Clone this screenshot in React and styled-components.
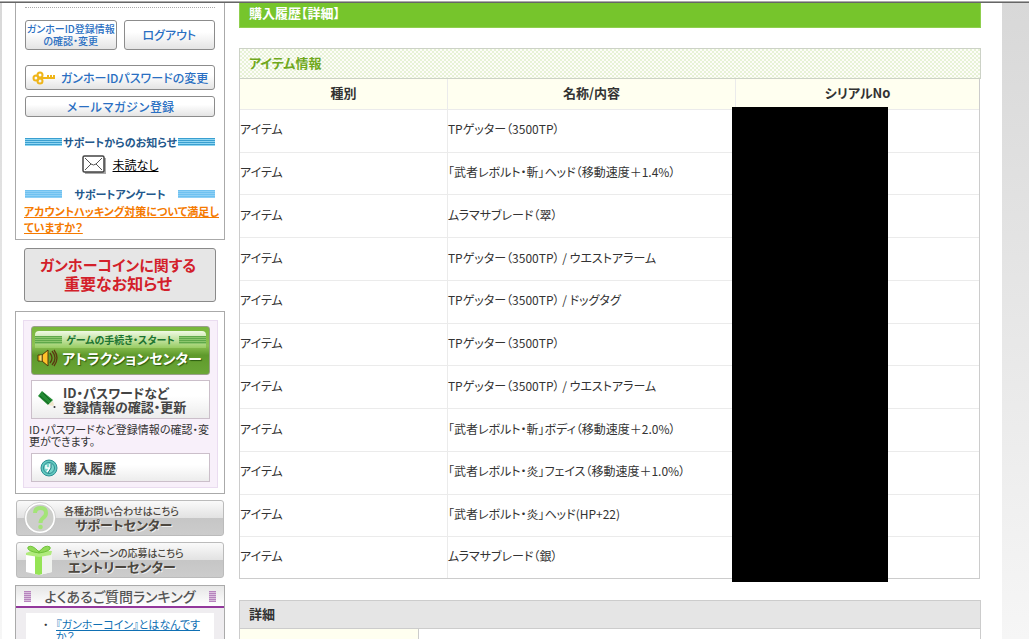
import React from "react";
import styled, { createGlobalStyle } from "styled-components";

const GlobalStyle = createGlobalStyle`
  * { box-sizing: border-box; }
  body {
    margin: 0;
    background: #fff;
    color: #333;
    font-family: "Noto Sans CJK JP", "Liberation Sans", sans-serif;
    font-size: 12px;
    line-height: 16px;
    font-feature-settings: "palt";
  }
  button, h1, h2, h3, p { margin: 0; }
  button { font: inherit; font-feature-settings: inherit; cursor: pointer; }
`;

const Page = styled.div`
  display: flex;
  flex-direction: column;
  height: 100vh;
  overflow: hidden;
`;

const TopRule = styled.div`
  flex: 0 0 3px;
  background: linear-gradient(#fff 0 1px, #aaa 1px 2px, #666 2px);
`;

const Backdrop = styled.div`
  flex: 1;
  min-height: 0;
  padding: 0 27px 0 2px;
  background: linear-gradient(#d8d8d8, #f6f6f6);
`;

const Sheet = styled.div`
  display: flex;
  align-items: flex-start;
  gap: 14px;
  height: 100%;
  padding: 0 21px 0 13px;
  background: #fff;
`;

const Sidebar = styled.aside`
  flex: 0 0 210px;
  display: flex;
  flex-direction: column;
  min-width: 0;
  width: 210px;
`;

const Main = styled.main`
  flex: 1;
  min-width: 0;
`;

const Panel = styled.section`
  border: 1px solid #aaa;
`;

const AccountPanel = styled(Panel)`
  border-top: 0;
  padding: 4px 9px 5px;
  height: 237px;
`;

const Dots = styled.hr`
  margin: 0 0 12px;
  border: 0;
  border-top: 1px dotted #aaa;
`;

const ButtonPair = styled.div`
  display: grid;
  grid-template-columns: minmax(0, 1fr) minmax(0, 1fr);
  gap: 7px;
  margin-bottom: 15px;
`;

const PillButton = styled.button`
  display: flex;
  align-items: center;
  justify-content: center;
  gap: 5px;
  width: 100%;
  height: ${(p) => p.$h}px;
  margin-bottom: ${(p) => p.$after || 0}px;
  padding: 0;
  border: 1px solid #8c8c8c;
  border-radius: 3px;
  background: linear-gradient(#fff 40%, #e4e4e4);
  color: #2a6fc2;
  font-size: ${(p) => p.$size}px;
  font-weight: 500;
  font-feature-settings: ${(p) => (p.$full ? "normal" : '"palt"')};
  line-height: 12px;
  white-space: nowrap;
`;

const Striped = styled.h3`
  display: flex;
  align-items: center;
  justify-content: space-between;
  height: 16px;
  color: #23588c;
  font-size: 11px;
  font-weight: 700;
  white-space: nowrap;
  &::before, &::after {
    content: "";
    width: 37px;
    height: 8px;
    background: ${(p) =>
      p.$soft
        ? "repeating-linear-gradient(#6fc1f0 0 1px, #8fd0f5 1px 2px)"
        : "repeating-linear-gradient(#3a9fd0 0 1px, #8fd6f2 1px 2px)"};
  }
`;

const MailRow = styled.div`
  display: flex;
  align-items: center;
  justify-content: center;
  gap: 7px;
  height: 19px;
  margin: 5px 0 12px;
  a { color: #000; }
`;

const SurveyLink = styled.a`
  display: block;
  margin: 1px -8px 0 -1px;
  color: #f57a00;
  font-size: 11px;
  font-weight: 700;
  white-space: nowrap;
`;

const Notice = styled.button`
  height: 54px;
  margin: 8px 9px 9px;
  padding: 0 4px 2px 0;
  border: 1px solid #8a8a8a;
  border-radius: 3px;
  background: #e6e6e6;
  color: #d3202a;
  font-size: 15px;
  font-weight: 700;
  line-height: 19px;
  white-space: nowrap;
  span { display: block; }
  span + span { font-size: 16px; }
`;

const ServicePanel = styled(Panel)`
  margin-bottom: 6px;
  padding: 8px 6px 5px 7px;
`;

const Lilac = styled.div`
  display: flex;
  flex-direction: column;
  height: 168px;
  padding: 5px 7px;
  border: 1px solid #eadcf0;
  background: #f8f0fa;
`;

const Attraction = styled.button`
  display: flex;
  flex-direction: column;
  height: 49px;
  margin-bottom: 5px;
  padding: 4px 3px 0;
  border: 1px solid #9a9f8c;
  border-radius: 3px;
  background: linear-gradient(#78b63c, #8cc152 40%, #5f9a2c 60%, #6aa636);
  color: #fff;
  white-space: nowrap;
`;

const AttractionTop = styled.span`
  display: flex;
  align-items: center;
  justify-content: space-between;
  align-self: stretch;
  height: 17px;
  border-radius: 4px 4px 0 0;
  background: linear-gradient(#f0fae4, #98cc62);
  color: #1c7430;
  font-size: 10px;
  font-weight: 700;
  &::before, &::after {
    content: "";
    width: 27px;
    height: 8px;
    background: repeating-linear-gradient(#5fa84a 0 1px, #8cc66c 1px 2px);
  }
`;

const AttractionName = styled.span`
  display: flex;
  align-items: center;
  gap: 4px;
  height: 20px;
  padding-left: 2px;
  font-size: 14px;
  font-weight: 700;
  text-shadow: 1px 1px 1px #2c5c10;
`;

const WhiteButton = styled.button`
  display: flex;
  align-items: center;
  gap: ${(p) => p.$gap}px;
  height: ${(p) => p.$h}px;
  padding: 0 0 0 ${(p) => p.$pad}px;
  border: 1px solid #cbbfca;
  background: linear-gradient(#fff 40%, #ececec);
  color: #444;
  font-size: 13px;
  font-weight: 700;
  line-height: 14px;
  text-align: left;
  white-space: nowrap;
`;

const Hint = styled.p`
  margin: 4px -6px 6px -2px;
  font-size: 11px;
  line-height: 12px;
  white-space: nowrap;
`;

const CenterButton = styled.button`
  display: grid;
  grid-template-columns: 34px 1fr;
  align-items: center;
  column-gap: ${(p) => p.$gap}px;
  height: 36px;
  margin: 0 1px 6px;
  padding: 0 0 0 6px;
  border: 1px solid #bbb;
  border-radius: 3px;
  background: linear-gradient(#fafafa, #e2e2e2 50%, #c6c6c6 50%, #ccc);
  color: #4c4740;
  text-align: left;
  white-space: nowrap;
  small, strong { display: block; line-height: 14px; }
  small { font-size: 10px; font-weight: 500; }
  strong { padding-left: ${(p) => p.$indent}px; font-size: 13px; text-shadow: 1px 1px 0 #eee; }
`;

const Ranking = styled(Panel)`
  margin-top: 1px;
  background: #efedf0;
`;

const RankingTitle = styled.h2`
  display: flex;
  align-items: center;
  justify-content: space-between;
  height: 22px;
  padding: 0 8px;
  border-bottom: 2px solid #93389c;
  background: linear-gradient(#e6e6e6, #fff);
  color: #555;
  font-size: 14px;
  font-weight: 500;
  white-space: nowrap;
  &::before, &::after {
    content: "";
    width: 7px;
    height: 11px;
    background: repeating-linear-gradient(#b684bd 0 1px, #d9bfdd 1px 2px);
  }
`;

const RankingList = styled.ul`
  margin: 5px 10px 0;
  padding: 5px 8px 10px 30px;
  background: #fff;
  list-style: none;
  font-size: 11px;
  line-height: 12px;
  li { white-space: nowrap; }
  li::before { content: "・"; float: left; margin-left: -13px; }
  a { color: #0f70b4; }
`;

const PageTitle = styled.h1`
  height: 25px;
  margin-bottom: 20px;
  padding: 2px 10px 0 9px;
  border: 1px solid #8fcf4e;
  border-top: 0;
  background: #76c52c;
  color: #fff;
  font-size: 13px;
  line-height: 16px;
`;

const Checked = styled.h2`
  height: 31px;
  padding: 0 9px;
  border: 1px solid #ccd2c6;
  background: repeating-conic-gradient(#e7f2d6 0 25%, #fdfdf8 0 50%) 0 0 / 4px 4px;
  color: #6fa81c;
  font-size: 13px;
  line-height: 27px;
`;

const TableArea = styled.div`
  position: relative;
  margin: 0 1px 21px 0;
`;

const Items = styled.table`
  width: 100%;
  height: 500px;
  table-layout: fixed;
  border-collapse: separate;
  border-spacing: 0;
  border: 1px solid #ccc;
  border-top: 0;
  font-family: "Liberation Sans Narrow", "Noto Sans CJK JP", sans-serif;
  th, td { border-bottom: 1px solid #ebebeb; white-space: nowrap; }
  th + th, td + td { border-left: 1px solid #ebebeb; }
  tbody tr:last-child td { border-bottom: 0; }
  th {
    height: 31px;
    padding: 0 0 3px;
    background: #fffff0;
    font-family: "Noto Sans CJK JP", sans-serif;
    font-size: 13px;
    font-weight: 700;
  }
  th:nth-child(1) { width: 28%; }
  th:nth-child(2) { width: 39%; }
  td { padding: 0 0 3px; }
`;

const Redaction = styled.div`
  position: absolute;
  top: 28px;
  bottom: -3px;
  left: 493px;
  width: 156px;
  background: #000;
`;

const DetailTitle = styled.h2`
  height: 29px;
  padding: 0 9px;
  border: 1px solid #ccc;
  background: #e5e5e5;
  font-size: 13px;
  line-height: 25px;
`;

const Details = styled.div`
  display: grid;
  grid-template-columns: 179px 1fr;
  height: 40px;
  border: 1px solid #ccc;
  border-top: 0;
  > span:first-child { border-right: 1px solid #ccc; background: #fffff0; }
`;

const Key = () => (
  <svg width="24" height="14" viewBox="0 0 24 14" fill="none" stroke="#efb51a" strokeWidth="2" aria-hidden="true">
    <circle cx="4" cy="7" r="2.5" />
    <circle cx="8" cy="4" r="2.5" />
    <circle cx="8" cy="10" r="2.5" />
    <path d="M10 7h13M16 7V4M19 7V4M22 8V4" />
  </svg>
);

const Envelope = () => (
  <svg width="24" height="19" viewBox="0 0 24 19" fill="none" aria-hidden="true">
    <path d="M3 3h21v16H3z" fill="#aaa" />
    <rect x="1" y="1" width="21" height="16" rx="1.5" fill="#fff" stroke="#444" strokeWidth="1.5" />
    <path d="M3 3l6 6q2.5 2 5 0l6-6M3 15l6-6M20 15l-6-6" stroke="#555" />
  </svg>
);

const Speaker = () => (
  <svg width="21" height="18" viewBox="0 0 21 18" aria-hidden="true">
    <path d="M1 6h4v6H1z M5 6l6-5v16l-6-5z" fill="#ffc22b" stroke="#513b0a" />
    <path d="M4 6v6" stroke="#fff0a0" />
    <path d="M13 4q4 5 0 10M15 2q6 7 0 14M17 1q6 8 0 16" fill="none" stroke="#5a3a10" strokeWidth="1.3" />
  </svg>
);

const Pencil = () => (
  <svg width="18" height="18" viewBox="0 0 18 18" aria-hidden="true">
    <path d="M4 0l11 9-5 5L0 5z" fill="#238b34" />
    <path d="M2 5l9 8M5 2l8 8" stroke="#12631f" />
    <path d="M15 10l1 4-1 1-5-1z" fill="#efe6cb" />
    <circle cx="16.5" cy="16" r="1" fill="#333" />
  </svg>
);

const Clock = () => (
  <svg width="18" height="18" viewBox="0 0 18 18" fill="none" aria-hidden="true">
    <circle cx="9" cy="9" r="8" fill="#63c9c0" stroke="#2e8f93" />
    <circle cx="9" cy="9" r="5.5" fill="#7ad5cc" stroke="#2e8f93" />
    <path d="M10 5v4l-3 4M6 6v3h3" stroke="#fff" strokeWidth="1.5" />
    <path d="M11 5v4l-3 5" stroke="#277c83" />
  </svg>
);

const Question = () => (
  <svg width="34" height="34" viewBox="0 0 34 34" fill="none" aria-hidden="true">
    <circle cx="17" cy="17" r="14.5" fill="#cdcecb" stroke="#fff" strokeWidth="2" />
    <circle cx="17" cy="17" r="15.7" stroke="#b8b8b8" strokeWidth=".6" />
    <path d="M12 12q0-5 5.500-5t5.500 5q0 3-3 5-2.500 2-2.500 5" stroke="#a3e477" strokeWidth="4" />
    <circle cx="17.5" cy="26" r="2.3" fill="#a3e477" />
  </svg>
);

const Gift = () => (
  <svg width="34" height="34" viewBox="0 0 34 34" aria-hidden="true">
    <path d="M3 11l13 2 13-2v18l-13 3-13-3z" fill="#fff" />
    <path d="M16 13l13-2v18l-13 3z" fill="#f0f2ee" />
    <path d="M12 12l7 1v18l-3 1-4-1z" fill="#95e455" />
    <path d="M3 10l8-3 18 1-1 4-12 2L3 12z" fill="#b0eb7c" />
    <path d="M16 9Q9 1 5 4q-2 4 11 6zM16 9q6-8 11-5 2 4-11 6z" fill="#92da58" stroke="#6fc33a" />
  </svg>
);

const items = [
  "TPゲッター（3500TP）",
  "「武者レボルト・斬」ヘッド（移動速度＋1.4%）",
  "ムラマサブレード（翠）",
  "TPゲッター（3500TP） / ウエストアラーム",
  "TPゲッター（3500TP） / ドッグタグ",
  "TPゲッター（3500TP）",
  "TPゲッター（3500TP） / ウエストアラーム",
  "「武者レボルト・斬」ボディ（移動速度＋2.0%）",
  "「武者レボルト・炎」フェイス（移動速度＋1.0%）",
  "「武者レボルト・炎」ヘッド(HP+22)",
  "ムラマサブレード（銀）",
];

export default function App() {
  return (
    <Page>
      <GlobalStyle />
      <TopRule />
      <Backdrop>
        <Sheet>
          <Sidebar>
            <AccountPanel>
              <Dots />
              <ButtonPair>
                <PillButton $h={30} $size={10}>ガンホーID登録情報<br />の確認・変更</PillButton>
                <PillButton $h={30} $size={12}>ログアウト</PillButton>
              </ButtonPair>
              <PillButton $h={25} $size={12} $after={6}><Key />ガンホーIDパスワードの変更</PillButton>
              <PillButton $h={21} $size={12} $after={17} $full>メールマガジン登録</PillButton>
              <Striped>サポートからのお知らせ</Striped>
              <MailRow><Envelope /><a href="#mail">未読なし</a></MailRow>
              <Striped $soft>サポートアンケート</Striped>
              <SurveyLink href="#survey">アカウントハッキング対策について満足し<br />ていますか？</SurveyLink>
            </AccountPanel>
            <Notice><span>ガンホーコインに関する</span><span>重要なお知らせ</span></Notice>
            <ServicePanel>
              <Lilac>
                <Attraction>
                  <AttractionTop>ゲームの手続き・スタート</AttractionTop>
                  <AttractionName><Speaker />アトラクションセンター</AttractionName>
                </Attraction>
                <WhiteButton $h={39} $pad={6} $gap={7}>
                  <Pencil />
                  <span>ID・パスワードなど<br />登録情報の確認・更新</span>
                </WhiteButton>
                <Hint>ID・パスワードなど登録情報の確認・変<br />更ができます。</Hint>
                <WhiteButton $h={29} $pad={8} $gap={6}><Clock />購入履歴</WhiteButton>
              </Lilac>
            </ServicePanel>
            <CenterButton $gap={7} $indent={11}>
              <Question />
              <span><small>各種お問い合わせはこちら</small><strong>サポートセンター</strong></span>
            </CenterButton>
            <CenterButton $gap={6} $indent={5}>
              <Gift />
              <span><small>キャンペーンの応募はこちら</small><strong>エントリーセンター</strong></span>
            </CenterButton>
            <Ranking>
              <RankingTitle>よくあるご質問ランキング</RankingTitle>
              <RankingList>
                <li><a href="#coin">『ガンホーコイン』とはなんです<br />か？</a></li>
              </RankingList>
            </Ranking>
          </Sidebar>
          <Main>
            <PageTitle>購入履歴【詳細】</PageTitle>
            <Checked>アイテム情報</Checked>
            <TableArea>
              <Items>
                <thead>
                  <tr><th>種別</th><th>名称/内容</th><th>シリアルNo</th></tr>
                </thead>
                <tbody>
                  {items.map((name, i) => (
                    <tr key={i}><td>アイテム</td><td>{name}</td><td /></tr>
                  ))}
                </tbody>
              </Items>
              <Redaction />
            </TableArea>
            <DetailTitle>詳細</DetailTitle>
            <Details><span /><span /></Details>
          </Main>
        </Sheet>
      </Backdrop>
    </Page>
  );
}
